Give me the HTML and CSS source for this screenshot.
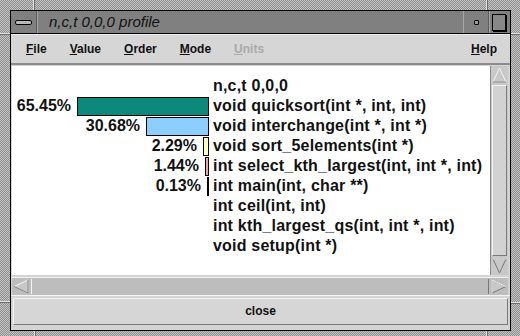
FILE: index.html
```html
<!DOCTYPE html>
<html lang="en">
<head>
    <meta charset="UTF-8">
    <title>n,c,t 0,0,0 profile</title>
    <link rel="stylesheet" href="styles.css">
</head>
<body>
    <!-- resize handle notches in the window frame -->
    <span class="notch v top-left"></span>
    <span class="notch v top-right"></span>
    <span class="notch v bottom-left"></span>
    <span class="notch v bottom-right"></span>
    <span class="notch h left-top"></span>
    <span class="notch h left-bottom"></span>
    <span class="notch h right-top"></span>
    <span class="notch h right-bottom"></span>

    <div class="window">
        <!-- window manager title bar -->
        <div class="titlebar">
            <div class="tb-btn tb-menu"><span class="dash"></span></div>
            <div class="tb-title">n,c,t 0,0,0 profile</div>
            <div class="tb-btn tb-min"><span class="dot"></span></div>
            <div class="tb-btn tb-max"><span class="square"></span></div>
        </div>

        <div class="menubar">
            <span class="menu"><u>F</u>ile</span>
            <span class="menu"><u>V</u>alue</span>
            <span class="menu"><u>O</u>rder</span>
            <span class="menu"><u>M</u>ode</span>
            <span class="menu disabled"><u>U</u>nits</span>
            <span class="menu help"><u>H</u>elp</span>
        </div>

        <div class="main">
            <div class="view">
                <div class="list">
                    <div class="row">
                        <div class="bar-col"></div>
                        <div class="label">n,c,t 0,0,0</div>
                    </div>
                    <div class="row">
                        <div class="bar-col">
                            <span class="pct">65.45%</span>
                            <span class="bar teal" style="width: 132px"></span>
                        </div>
                        <div class="label">void quicksort(int *, int, int)</div>
                    </div>
                    <div class="row">
                        <div class="bar-col">
                            <span class="pct">30.68%</span>
                            <span class="bar blue" style="width: 63px"></span>
                        </div>
                        <div class="label">void interchange(int *, int *)</div>
                    </div>
                    <div class="row">
                        <div class="bar-col">
                            <span class="pct">2.29%</span>
                            <span class="bar yellow" style="width: 6px"></span>
                        </div>
                        <div class="label">void sort_5elements(int *)</div>
                    </div>
                    <div class="row">
                        <div class="bar-col">
                            <span class="pct">1.44%</span>
                            <span class="bar pink" style="width: 4px"></span>
                        </div>
                        <div class="label">int select_kth_largest(int, int *, int)</div>
                    </div>
                    <div class="row">
                        <div class="bar-col">
                            <span class="pct">0.13%</span>
                            <span class="bar line" style="width: 2px"></span>
                        </div>
                        <div class="label">int main(int, char **)</div>
                    </div>
                    <div class="row">
                        <div class="bar-col"></div>
                        <div class="label">int ceil(int, int)</div>
                    </div>
                    <div class="row">
                        <div class="bar-col"></div>
                        <div class="label">int kth_largest_qs(int, int *, int)</div>
                    </div>
                    <div class="row">
                        <div class="bar-col"></div>
                        <div class="label">void setup(int *)</div>
                    </div>
                </div>

                <div class="vscroll">
                    <svg class="arrow" width="15" height="16" viewBox="0 0 15 16">
                        <path d="M7.5 1 L14 15 L1 15 Z" fill="#c8c8c8" stroke="#f4f4f4"/>
                        <path d="M14 15 L1 15" fill="none" stroke="#7a7a7a"/>
                    </svg>
                    <div class="vthumb"></div>
                    <svg class="arrow" width="15" height="16" viewBox="0 0 15 16">
                        <path d="M1 1 L14 1 L7.5 15 Z" fill="#c8c8c8" stroke="#7a7a7a"/>
                        <path d="M1 1 L14 1" stroke="#f4f4f4"/>
                    </svg>
                </div>
            </div>

            <div class="hscroll">
                <svg class="arrow" width="16" height="15" viewBox="0 0 16 15">
                    <path d="M1 7.5 L15 1 L15 14 Z" fill="#c8c8c8" stroke="#f4f4f4"/>
                    <path d="M15 1 L15 14 L1 7.5" fill="none" stroke="#7a7a7a"/>
                </svg>
                <div class="hthumb"></div>
                <svg class="arrow" width="16" height="15" viewBox="0 0 16 15">
                    <path d="M1 1 L15 7.5 L1 14 Z" fill="#c8c8c8" stroke="#7a7a7a"/>
                    <path d="M1 14 L1 1 L15 7.5" fill="none" stroke="#f4f4f4"/>
                </svg>
            </div>
        </div>

        <div class="buttonbar">
            <div class="close-btn">close</div>
        </div>
    </div>
</body>
</html>
```

FILE: styles.css
```css
body {
    margin: 0;
    width: 520px;
    height: 336px;
    overflow: hidden;
    position: relative;
    font-family: 'Liberation Sans', Arial, sans-serif;
    /* dithered window frame */
    background: repeating-conic-gradient(#8e8e8e 0 25%, #c4c4c4 0 50%) 0 0 / 2px 2px;
}

/* small grooves marking the frame's resize corners */
.notch {
    position: absolute;
    background-color: #e2e2e2;
}

.notch.v {
    width: 1px;
    box-shadow: 1px 0 0 #6e6e6e;
}

.notch.h {
    height: 1px;
    box-shadow: 0 1px 0 #6e6e6e;
}

.notch.top-left { left: 33px; top: 0; height: 10px; }
.notch.top-right { left: 486px; top: 0; height: 10px; }
.notch.bottom-left { left: 34px; top: 330px; height: 6px; }
.notch.bottom-right { left: 486px; top: 330px; height: 6px; }
.notch.left-top { left: 0; top: 33px; width: 10px; }
.notch.left-bottom { left: 0; top: 301px; width: 10px; }
.notch.right-top { left: 510px; top: 33px; width: 10px; }
.notch.right-bottom { left: 510px; top: 302px; width: 10px; }

.window {
    margin: 10px 0 0 10px;
    width: 499px;
    height: 319px;
    border: 1px solid #000;
    background-color: #d4d4d4;
    display: flex;
    flex-direction: column;
    position: relative;
}

/* ---- title bar ---- */
.titlebar {
    height: 22px;
    display: flex;
    background-color: #808080;
    border-bottom: 1px solid #000;
}

.tb-btn {
    display: flex;
    align-items: center;
    justify-content: center;
    border-left: 1px solid #a8a8a8;
    border-right: 1px solid #5a5a5a;
    box-sizing: border-box;
}

.tb-menu {
    width: 26px;
    border-left: none;
}

.dash {
    width: 15px;
    height: 3px;
    background-color: #b8b8b8;
    border: 1px solid #000;
    border-radius: 2px;
}

.tb-title {
    flex: 1;
    padding-left: 11px;
    font-style: italic;
    font-size: 15px;
    line-height: 22px;
    color: #111;
    border-left: 1px solid #a8a8a8;
}

.tb-min {
    width: 26px;
}

.dot {
    width: 3px;
    height: 3px;
    border: 1px solid #000;
    background-color: #999;
    border-radius: 1px;
}

.tb-max {
    width: 21px;
    border-right: none;
    justify-content: flex-start;
    padding-left: 2px;
}

.square {
    width: 12px;
    height: 15px;
    border: 1px solid #000;
    box-shadow: 1px 1px 0 #000;
    background-color: #888;
}

/* ---- menu bar ---- */
.menubar {
    height: 28px;
    display: flex;
    align-items: center;
    gap: 23px;
    padding: 0 13px 0 15px;
    background-color: #d6d6d6;
    border-top: 1px solid #ececec;
    border-bottom: 2px solid #8c8c8c;
    font-size: 12px;
    font-weight: bold;
    color: #111;
}

.menu.disabled {
    color: #aaaaaa;
}

.menu.help {
    margin-left: auto;
}

/* ---- main area ---- */
.main {
    flex: 1;
    display: flex;
    flex-direction: column;
    padding: 1px 2px 0 1px;
}

.view {
    flex: 1;
    display: flex;
    background-color: #fff;
}

.list {
    flex: 1;
    padding-top: 11px;
    font-size: 16px;
    font-weight: bold;
    letter-spacing: 0.2px;
    color: #111;
}

.row {
    display: flex;
    height: 20px;
}

.bar-col {
    width: 197px;
    display: flex;
    justify-content: flex-end;
    align-items: flex-start;
    gap: 6px;
}

.pct {
    line-height: 20px;
    margin-top: -1px;
    letter-spacing: 0;
}

.bar {
    height: 19px;
    box-sizing: border-box;
    border: 1px solid #000;
}

.bar.teal { background-color: #0b8a7c; }
.bar.blue { background-color: #8ccfff; }
.bar.yellow { background-color: #ffffc4; }
.bar.pink { background-color: #f4a4a4; }
.bar.line { background-color: #000; }

.label {
    padding-left: 4px;
    line-height: 20px;
    margin-top: -1px;
    white-space: nowrap;
}

.vscroll {
    width: 17px;
    display: flex;
    flex-direction: column;
    align-items: center;
    padding: 1px 0;
    background-color: #c8c8c8;
    border-left: 1px solid #8a8a8a;
}

.vthumb {
    flex: 1;
    width: 13px;
    margin: 2px 0;
    background-color: #d2d2d2;
    border-top: 1px solid #f4f4f4;
    border-left: 1px solid #f4f4f4;
    border-right: 1px solid #7a7a7a;
    border-bottom: 1px solid #7a7a7a;
}

.hscroll {
    height: 17px;
    margin-top: 2px;
    display: flex;
    align-items: center;
    padding: 0 1px;
    background-color: #bdbdbd;
    border-top: 1px solid #f0f0f0;
}

.hthumb {
    flex: 1;
    height: 15px;
    margin: 0 2px;
    box-sizing: border-box;
    background-color: #bdbdbd;
    border-left: 1px solid #f4f4f4;
    border-right: 1px solid #7a7a7a;
}

/* ---- close button bar ---- */
.buttonbar {
    padding: 2px 2px 5px 2px;
    background-color: #d4d4d4;
    border-top: 1px solid #f4f4f4;
}

.close-btn {
    height: 25px;
    line-height: 25px;
    text-align: center;
    font-size: 12px;
    font-weight: bold;
    color: #111;
    background-color: #d6d6d6;
    border-top: 1px solid #f4f4f4;
    border-left: 1px solid #f4f4f4;
    border-right: 1px solid #7a7a7a;
    border-bottom: 1px solid #7a7a7a;
}
```
